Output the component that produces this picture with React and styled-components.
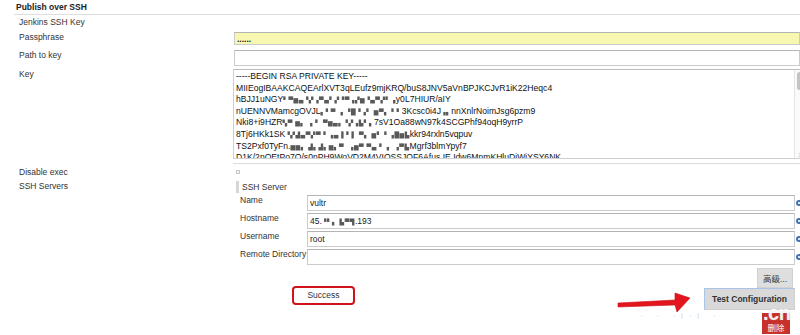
import React from "react";
import styled, { createGlobalStyle } from "styled-components";

const Global = createGlobalStyle`
  html, body { margin: 0; padding: 0; background: #fff; }
  body {
    font-family: "Liberation Sans", Arial, "Noto Sans CJK SC", sans-serif;
    font-size: 8.5px;
    color: #333;
  }
  * { box-sizing: border-box; }
`;

const Page = styled.div`
  position: relative;
  width: 800px;
  height: 335px;
  overflow: hidden;
  background: #fff;
`;

const SectionHeader = styled.div`
  margin-left: 14px;
  padding-left: 2px;
  height: 15px;
  line-height: 14px;
  font-weight: bold;
  color: #222;
  border-bottom: 1px solid #dedede;
`;

const Form = styled.div`
  display: grid;
  grid-template-columns: 234px 566px;
`;

const Label = styled.div`
  padding-left: 19px;
  padding-top: ${(p) => p.$top ?? 2}px;
  line-height: 11px;
  white-space: nowrap;
`;

const Field = styled.div`
  padding-top: ${(p) => p.$top ?? 2}px;
  padding-bottom: ${(p) => p.$bottom ?? 0}px;
  min-height: ${(p) => p.$min ?? 0}px;
`;

const TextInput = styled.input`
  display: block;
  width: 100%;
  height: ${(p) => p.$h ?? 16}px;
  margin: 0;
  padding: 0 2px;
  border: 1px solid #cbcbcb;
  border-top-color: #b4b4b4;
  border-radius: 0;
  background: ${(p) => (p.$yellow ? "#f7f7b2" : "#fff")};
  font-family: "Liberation Sans", Arial, sans-serif;
  font-size: 8.5px;
  font-weight: ${(p) => (p.$dots ? "bold" : "normal")};
  color: #222;
  outline: none;
`;

const KeyWrap = styled.div`
  margin-left: -1px;
  padding-bottom: 4px;
  border-bottom: 1px solid #dcdcdc;
`;

const KeyBox = styled.div`
  display: flex;
  width: calc(100% + 4px);
  height: 90px;
  border: 1px solid #cfcfcf;
  border-top-color: #bdbdbd;
  background: #fff;
`;

const KeyText = styled.div`
  flex: 1;
  overflow: hidden;
  padding: 1px 2px 0 2px;
  font-size: 8.6px;
  line-height: 11.6px;
  color: #111;
  white-space: pre;
`;

const Masked = styled.span`
  font-family: "DejaVu Sans", sans-serif;
  font-size: 6px;
  letter-spacing: 0.5px;
  color: #222;
  opacity: 0.75;
  filter: blur(0.3px);
`;

const ScrollTrack = styled.div`
  position: relative;
  width: 9px;
  border-left: 1px solid #e4e4e4;
  background: #fafafa;
`;

const ScrollThumb = styled.div`
  width: 5px;
  height: 18px;
  margin: 2px 0 0 2px;
  border-radius: 3px;
  background: #c4c4c4;
`;

const Grip = styled.div`
  position: absolute;
  left: 2px;
  bottom: 1px;
  width: 4px;
  height: 4px;
  border-right: 1px solid #aaa;
  border-bottom: 1px solid #aaa;
  transform: rotate(-45deg) scale(0.8);
  opacity: 0.6;
`;

const Checkbox = styled.div`
  margin-left: 2px;
  width: 4px;
  height: 4px;
  border: 1px solid #c8c8c8;
  background: #f4f4f4;
`;

const ServerBlock = styled.div`
  padding-top: 2px;
`;

const ServerTitle = styled.div`
  margin-left: 2px;
  height: 12px;
  line-height: 12px;
  padding-left: 3px;
  border-left: 3px solid #d6d6d6;
`;

const FieldsGrid = styled.div`
  margin: 2px 0 0 6px;
  display: grid;
  grid-template-columns: 67px 488px 5px;
  row-gap: 2px;
  align-items: start;
`;

const SubLabel = styled.div`
  line-height: 11px;
  white-space: nowrap;
`;

const Help = styled.div`
  align-self: center;
  margin-left: 1px;
  width: 6px;
  height: 6px;
  border-radius: 50%;
  background: radial-gradient(circle at 50% 50%, #dce8f8 0 1px, #3f72b8 1.3px);
`;

const Footer = styled.div`
  display: flex;
  flex-direction: column;
`;

const ButtonRow = styled.div`
  display: flex;
  align-items: flex-start;
  justify-content: flex-end;
  padding-right: ${(p) => p.$right}px;
  margin-top: ${(p) => p.$top ?? 0}px;
`;

const GrayButton = styled.button`
  height: ${(p) => p.$h}px;
  padding: 0 ${(p) => p.$pad}px;
  margin: 0;
  border: 1px solid #d2d2d2;
  border-radius: 0;
  background: #dedede;
  color: #333;
  font-family: "Liberation Sans", Arial, "Noto Sans CJK SC", sans-serif;
  font-size: 8.5px;
  font-weight: ${(p) => (p.$bold ? "bold" : "normal")};
  cursor: pointer;
`;

const TestButton = styled(GrayButton)`
  margin-right: 5px;
  border-color: #a9c4e8 #cfcfcf #cfcfcf #a9c4e8;
  background: #d9d9d9;
`;

const TestRow = styled.div`
  display: flex;
  align-items: flex-start;
`;

const SuccessBox = styled.div`
  margin: -2px 0 0 58px;
  width: 63px;
  height: 19px;
  line-height: 15px;
  text-align: center;
  border: 2px solid #d0121b;
  border-radius: 4px;
  color: #333;
`;

const Spacer = styled.div`
  flex: 1;
`;

const DeleteButton = styled.button`
  width: 28px;
  height: 21px;
  margin: 0;
  padding: 6px 0 0;
  border: none;
  border-radius: 0;
  background: #c8302c;
  color: #fff;
  font-family: "Noto Sans CJK SC", sans-serif;
  font-size: 8.5px;
  line-height: 12px;
`;

const Arrow = styled.svg`
  position: absolute;
  left: 615px;
  top: 290px;
`;

const Watermark = styled.div`
  position: absolute;
  left: 763px;
  top: 302px;
  font-family: "Liberation Sans", Arial, sans-serif;
  font-size: 20px;
  font-weight: bold;
  color: rgba(255, 255, 255, 0.9);
  letter-spacing: -0.5px;
  text-shadow: 0 0 1px rgba(180, 180, 180, 0.6);
`;

const WatermarkDots = styled.div`
  position: absolute;
  left: 640px;
  top: 310px;
  font-family: "Liberation Sans", Arial, sans-serif;
  font-size: 10px;
  letter-spacing: 5px;
  color: #d4e2f3;
`;

const HostValue = styled.div`
  display: flex;
  align-items: center;
  height: 16px;
  padding: 0 2px;
  border: 1px solid #cbcbcb;
  border-top-color: #b4b4b4;
  background: #fff;
  color: #222;
`;

const keyLines = [
  ["-----BEGIN RSA PRIVATE KEY-----"],
  ["MIIEogIBAAKCAQEArlXVT3qLEufz9mjKRQ/buS8JNV5aVnBPJKCJvR1iK22Heqc4"],
  ["hBJJ1uNGY", "▘▀▆▄▝▞▗▀▄▘▞▝▀▗▞▆▝▄▀▞▘▗", "y0L7HIUR/aIY"],
  ["nUENNVMamcgOVJL", "▖▘▀ ▗ ▝█▝▗▘ ▆▀▖▝▝ ", "3Kcsc0i4J", "▗▖", "nnXnlrNoimJsg6pzm9"],
  ["Nki8+i9HZR", "▚▀ ▆▖ ▗ ▘ ▀▆▄▖▝▞▗▙▘▖", "7sV1Oa88wN97k4SCGPhf94oqH9yrrP"],
  ["8Tj6HKk1SK", "▝▞▟▄▀▞▀▝ ▗▄ ▌▘▌ ▀▖ ▆▘ ▘▗█▆▙", "kkr94rxln5vqpuv"],
  ["TS2Pxf0TyFn.", "▆▆▖ ▟▖▟▖▆▖▀  ▗▆▀ ▀▄ ▘ ▖ ▗▀▙", "Mgrf3blmYpyf7"],
  ["D1K/2nOEtPo7Q/s0nPH9WoVD2M4VIOSSJOF6Afus IE Idw6MnmKHluDjWjYSY6NK"],
];

const servers = [
  { label: "Name", value: "vultr" },
  { label: "Hostname", value: "45.", masked: true },
  { label: "Username", value: "root" },
  { label: "Remote Directory", value: "" },
];

export default function App() {
  return (
    <Page>
      <Global />
      <SectionHeader>Publish over SSH</SectionHeader>
      <Form>
        <Label>Jenkins SSH Key</Label>
        <Field $top={0} $min={15} />

        <Label>Passphrase</Label>
        <Field $top={2} $bottom={3}>
          <TextInput $h={13} $yellow $dots readOnly defaultValue="......" />
        </Field>

        <Label>Path to key</Label>
        <Field $top={2} $bottom={1}>
          <TextInput readOnly defaultValue="" />
        </Field>

        <Label>Key</Label>
        <Field $top={2}>
          <KeyWrap>
            <KeyBox>
              <KeyText>
                {keyLines.map((parts, i) => (
                  <div key={i}>
                    {parts.map((p, j) =>
                      j % 2 === 1 ? <Masked key={j}>{p}</Masked> : <span key={j}>{p}</span>
                    )}
                  </div>
                ))}
              </KeyText>
              <ScrollTrack>
                <ScrollThumb />
                <Grip />
              </ScrollTrack>
            </KeyBox>
          </KeyWrap>
        </Field>

        <Label $top={3}>Disable exec</Label>
        <Field $top={6} $min={15}>
          <Checkbox />
        </Field>

        <Label>SSH Servers</Label>
        <Field $top={0}>
          <ServerBlock>
            <ServerTitle>SSH Server</ServerTitle>
            <FieldsGrid>
              {servers.map((s) => (
                <React.Fragment key={s.label}>
                  <SubLabel>{s.label}</SubLabel>
                  {s.masked ? (
                    <HostValue>
                      45.<Masked>▝▘▖ ▙▀▜</Masked>.193
                    </HostValue>
                  ) : (
                    <TextInput readOnly defaultValue={s.value} />
                  )}
                  <Help />
                </React.Fragment>
              ))}
            </FieldsGrid>
            <Footer>
              <ButtonRow $right={7} $top={3}>
                <GrayButton $h={20} $pad={5}>高级...</GrayButton>
              </ButtonRow>
              <TestRow>
                <SuccessBox>Success</SuccessBox>
                <Spacer />
                <TestButton $h={22} $pad={7} $bold>
                  Test Configuration
                </TestButton>
              </TestRow>
              <ButtonRow $right={10} $top={3}>
                <DeleteButton>删除</DeleteButton>
              </ButtonRow>
            </Footer>
          </ServerBlock>
        </Field>
      </Form>

      <Arrow width="80" height="25" viewBox="0 0 80 25">
        <polygon
          points="3,13 60,10 60,3 75,8 62,22 60,15 3,17"
          fill="#e3161d"
          stroke="#c80f15"
          strokeWidth="0.6"
          strokeLinejoin="round"
        />
      </Arrow>
      <WatermarkDots>· · ·ı·ı ·</WatermarkDots>
      <Watermark>.cn</Watermark>
    </Page>
  );
}
